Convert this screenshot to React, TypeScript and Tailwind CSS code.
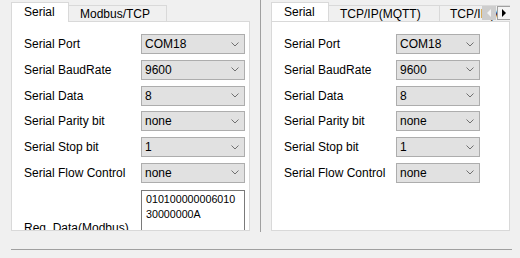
import React from "react";

const leftRows = [
  { label: "Serial Port", value: "COM18" },
  { label: "Serial BaudRate", value: "9600" },
  { label: "Serial Data", value: "8" },
  { label: "Serial Parity bit", value: "none" },
  { label: "Serial Stop bit", value: "1" },
  { label: "Serial Flow Control", value: "none" },
];

function Chevron() {
  return (
    <svg width="8" height="5" viewBox="0 0 8 5" className="shrink-0">
      <polyline points="0.5,0.5 4,4 7.5,0.5" fill="none" stroke="#707070" strokeWidth="1" />
    </svg>
  );
}

function Combo({ value, wide }: { value: string; wide: boolean }) {
  return (
    <div
      className={`flex h-[20px] items-center justify-between border border-[#adadad] bg-[#e1e1e1] pl-[3px] pr-[5px] ${
        wide ? "w-[104px]" : "w-[84px]"
      }`}
    >
      <span className="leading-[14px]">{value}</span>
      <Chevron />
    </div>
  );
}

function Tab({ label, active, className }: { label: string; active?: boolean; className: string }) {
  if (active) {
    return (
      <div
        className={`relative z-10 -mb-px flex h-[20px] shrink-0 items-center border-x border-t border-[#d9d9d9] bg-white pb-[1px] ${className}`}
      >
        {label}
      </div>
    );
  }
  return (
    <div
      className={`flex h-[16px] shrink-0 items-center whitespace-nowrap border-r border-t border-[#d9d9d9] bg-[#f0f0f0] ${className}`}
    >
      {label}
    </div>
  );
}

function ScrollArrows() {
  return (
    <div className="absolute right-[-1px] top-[4px] flex gap-[1px]">
      <div className="flex h-[14px] w-[14px] items-center justify-center bg-[#cdcdcd]">
        <svg width="5" height="8" viewBox="0 0 5 8">
          <polygon points="4,0 0,4 4,8" fill="#f4f4f4" />
        </svg>
      </div>
      <div className="flex h-[14px] w-[14px] items-center justify-center border border-[#a0a0a0] bg-[#f4f4f4]">
        <svg width="5" height="8" viewBox="0 0 5 8">
          <polygon points="0,0 4,4 0,8" fill="#000" />
        </svg>
      </div>
    </div>
  );
}

export default function App() {
  return (
    <div className="h-[258px] w-[520px] overflow-hidden bg-[#f0f0f0] font-['Liberation_Sans',Arial,sans-serif] text-[12px] text-black">
      <div className="flex h-[232px]">
        {/* Left tab control */}
        <div className="w-[260px] pl-[11px] pt-[2px]">
          <div className="flex h-[19px] w-[239px] items-end">
            <Tab label="Serial" active className="w-[58px] pl-[12px]" />
            <Tab label="Modbus/TCP" className="w-[98px] pl-[11px]" />
          </div>
          <div className="h-[210px] w-[239px] overflow-hidden border border-[#d9d9d9] bg-white pl-[12px] pt-[12px]">
            <div className="flex flex-col gap-[5.8px]">
              {leftRows.map((r) => (
                <div key={r.label} className="flex items-center">
                  <span className="w-[117px] shrink-0 whitespace-nowrap leading-[14px]">{r.label}</span>
                  <Combo value={r.value} wide />
                </div>
              ))}
              <div className="mt-[1.2px] flex items-start">
                <span className="mt-[31px] w-[117px] shrink-0 whitespace-nowrap leading-[14px]">
                  Req. Data(Modbus)
                </span>
                <div className="h-[60px] w-[104px] border border-[#7a7a7a] bg-white pl-[4px] pt-[1px] text-[10.7px] leading-[15px]">
                  <div>010100000006010</div>
                  <div>30000000A</div>
                </div>
              </div>
            </div>
          </div>
        </div>

        {/* Splitter */}
        <div className="w-px bg-[#a0a0a0]" />

        {/* Right tab control */}
        <div className="pl-[10px] pt-[2px]">
          <div className="relative flex h-[19px] w-[239px] items-end overflow-hidden">
            <Tab label="Serial" active className="w-[58px] pl-[12px]" />
            <Tab label="TCP/IP(MQTT)" className="w-[111px] pl-[11px]" />
            <Tab label="TCP/IP(Modbus)" className="w-[110px] pl-[10px]" />
            <ScrollArrows />
          </div>
          <div className="h-[210px] w-[239px] overflow-hidden border border-[#d9d9d9] bg-white pl-[12px] pt-[12px]">
            <div className="flex flex-col gap-[5.8px]">
              {leftRows.map((r) => (
                <div key={r.label} className="flex items-center">
                  <span className="w-[112px] shrink-0 whitespace-nowrap leading-[14px]">{r.label}</span>
                  <Combo value={r.value} wide={false} />
                </div>
              ))}
            </div>
          </div>
        </div>
      </div>

      {/* Bottom separator */}
      <div className="ml-[11px] mt-[17px] h-px w-[501px] bg-[#a0a0a0]" />
    </div>
  );
}
